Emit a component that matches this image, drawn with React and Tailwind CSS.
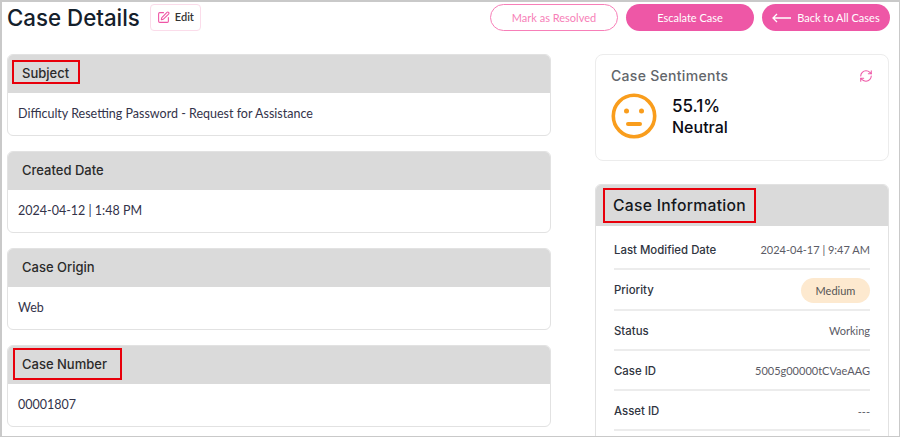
import React from 'react';
import { RefreshCw, SquarePen } from 'lucide-react';

const HEAD = "font-['Inter',sans-serif]";
const BODY = "font-['Lato',sans-serif]";

const fields = [
  { label: 'Subject', value: 'Difficulty Resetting Password - Request for Assistance', box: 'w-[68px] h-[24px] ml-[-2px] mb-[4px] pl-[8px] pt-[3px]' },
  { label: 'Created Date', value: '2024-04-12 | 1:48 PM' },
  { label: 'Case Origin', value: 'Web' },
  { label: 'Case Number', value: '00001807', box: 'w-[109px] h-[32px] ml-[-1px] mb-[2px] pl-[7px] pt-[1px]' },
];

const info = [
  { label: 'Last Modified Date', value: '2024-04-17 | 9:47 AM' },
  { label: 'Priority', value: 'Medium', pill: true },
  { label: 'Status', value: 'Working' },
  { label: 'Case ID', value: '5005g00000tCVaeAAG' },
  { label: 'Asset ID', value: '---' },
];

function FieldCard({ field }) {
  return (
    <div className="h-[82px] rounded-md border border-[#e2e2e2] bg-white overflow-hidden">
      <div className="h-[38px] bg-[#dadada] flex items-center pl-[6px]">
        {field.box ? (
          <div className={`${field.box} flex items-center border-2 border-[#e8000b]`}>
            <span className={`${HEAD} text-[13px] font-medium text-[#2a2a2a] whitespace-nowrap`}>{field.label}</span>
          </div>
        ) : (
          <span className={`${HEAD} pl-[8px] text-[13px] font-medium text-[#2a2a2a]`}>{field.label}</span>
        )}
      </div>
      <p className={`${BODY} pl-[10px] pt-[11.5px] text-[12.5px] leading-[18px] text-[#33334a]`}>{field.value}</p>
    </div>
  );
}

function NeutralFace() {
  return (
    <svg width="46" height="46" viewBox="0 0 46 46" className="shrink-0">
      <circle cx="23" cy="23" r="20.7" fill="none" stroke="#f99d1c" strokeWidth="3.6" />
      <circle cx="15.5" cy="18" r="2.5" fill="#f99d1c" />
      <circle cx="30.5" cy="18" r="2.5" fill="#f99d1c" />
      <rect x="15" y="29" width="16" height="4" rx="2" fill="#f99d1c" />
    </svg>
  );
}

function LongArrow() {
  return (
    <svg width="19" height="10" viewBox="0 0 19 10" fill="none" stroke="currentColor" strokeWidth="1.3" className="shrink-0">
      <path d="M1 5H19M5 1L1 5L5 9" />
    </svg>
  );
}

export default function App() {
  return (
    <div className="w-[900px] h-[437px] overflow-hidden border-2 border-b border-r border-[#c9c9c9] bg-white">
      <div className="h-[52px] flex items-start pl-[5px] pr-[9px] pt-[2px]">
        <h1 className={`${HEAD} text-[22.3px] leading-[28px] font-medium text-[#14202b]`}>Case Details</h1>
        <button className={`${BODY} ml-[10px] h-[27px] w-[51px] rounded-[4px] border border-[#fbdcea] flex items-center justify-center gap-[5px] text-[11px] font-semibold text-[#333]`}>
          <SquarePen className="w-[13px] h-[13px] text-[#ef55a5]" strokeWidth={2} />
          Edit
        </button>
        <div className={`${BODY} ml-auto flex gap-[8px] text-[11px]`}>
          <button className="w-[128px] h-[27px] pt-[1px] rounded-full border border-[#f77fb8] text-[#f77fb8]">Mark as Resolved</button>
          <button className="w-[128px] h-[27px] pt-[1px] rounded-full bg-[#ee57a6] text-white">Escalate Case</button>
          <button className="w-[128px] h-[27px] pt-[1px] rounded-full bg-[#ee57a6] text-white flex items-center justify-center gap-[6px]">
            <LongArrow />
            Back to All Cases
          </button>
        </div>
      </div>

      <div className="flex pl-[5px] pr-[9px]">
        <div className="w-[544px] flex flex-col gap-[15px]">
          {fields.map((field) => (
            <FieldCard key={field.label} field={field} />
          ))}
        </div>

        <div className="ml-[44px] w-[294px] flex flex-col gap-[23px]">
          <div className="h-[107px] rounded-lg border border-[#ececec] pl-[15px] pr-[15px] pt-[11px]">
            <div className="flex items-center justify-between">
              <h2 className={`${HEAD} text-[14px] leading-[20px] font-medium text-[#62666b] tracking-[0.3px]`}>Case Sentiments</h2>
              <RefreshCw className="w-[14px] h-[14px] text-[#ee57a6]" strokeWidth={1.8} />
            </div>
            <div className="mt-[7px] flex items-center gap-[15px]">
              <NeutralFace />
              <div className={`${HEAD} font-medium text-[#0b0b14]`}>
                <div className="text-[17px] leading-[21px]">55.1%</div>
                <div className="text-[16px] leading-[20px]">Neutral</div>
              </div>
            </div>
          </div>

          <div className="h-[260px] rounded-t-md border border-[#e2e2e2] overflow-hidden">
            <div className="h-[41px] bg-[#dadada] flex items-center pl-[7px]">
              <div className="w-[153px] h-[35px] flex items-center pl-[8px] border-2 border-[#e8000b]">
                <h2 className={`${HEAD} text-[15.7px] font-medium text-[#14171c] tracking-[0.3px] whitespace-nowrap`}>Case Information</h2>
              </div>
            </div>
            <div className="px-[18px] pt-[4px]">
              {info.map((row) => (
                <div key={row.label} className="h-[40.3px] pt-[3px] flex items-center justify-between border-b-2 border-[#ececec]">
                  <span className={`${HEAD} text-[11.4px] font-medium text-[#2f3440]`}>{row.label}</span>
                  {row.pill ? (
                    <span className={`${BODY} w-[69px] h-[25px] rounded-full bg-[#fde9cf] flex items-center justify-center text-[11px] text-[#555]`}>{row.value}</span>
                  ) : (
                    <span className={`${BODY} text-[11px] text-[#5b5b66]`}>{row.value}</span>
                  )}
                </div>
              ))}
            </div>
          </div>
        </div>
      </div>
    </div>
  );
}
